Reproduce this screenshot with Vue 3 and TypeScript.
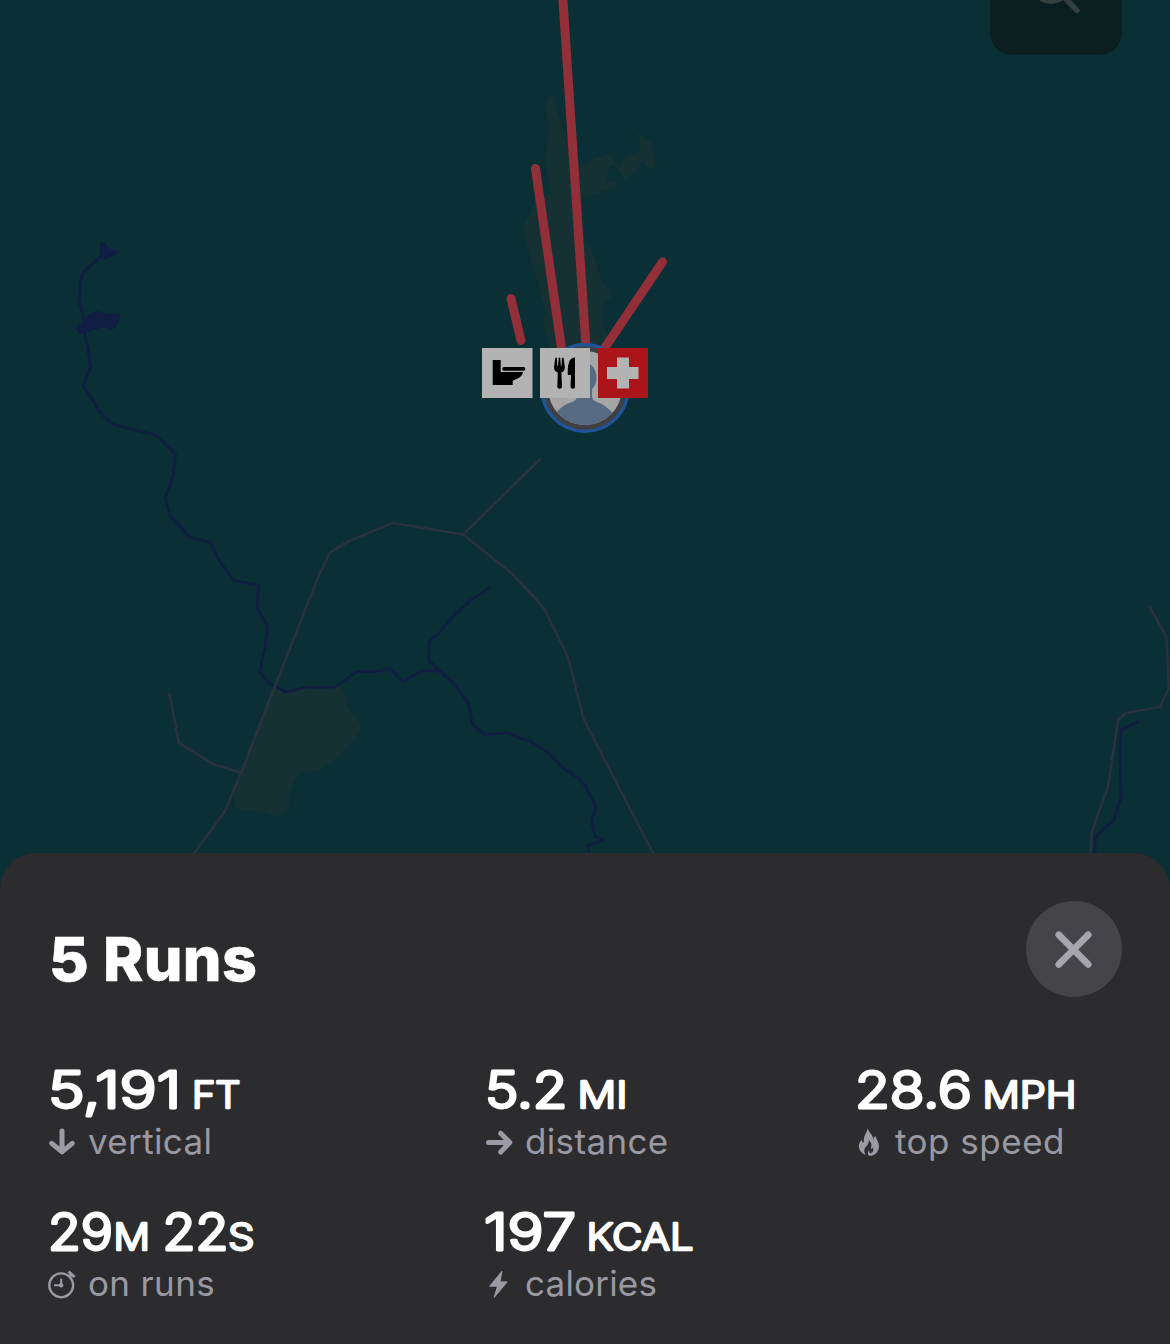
<script setup lang="ts">
type Icon = 'down' | 'right' | 'flame' | 'clock' | 'bolt'

interface Part {
  text: string
  x: number
  width: number
  unit?: boolean
}

interface Stat {
  icon: Icon
  label: string
  parts: Part[]
}

const stats: Stat[] = [
  {
    icon: 'down', label: 'vertical',
    parts: [{ text: '5,191', x: 0, width: 133 }, { text: 'FT', x: 144, width: 48.5, unit: true }],
  },
  {
    icon: 'right', label: 'distance',
    parts: [{ text: '5.2', x: 0, width: 82.5 }, { text: 'MI', x: 92.5, width: 50, unit: true }],
  },
  {
    icon: 'flame', label: 'top speed',
    parts: [{ text: '28.6', x: 0, width: 117 }, { text: 'MPH', x: 127.5, width: 94, unit: true }],
  },
  {
    icon: 'clock', label: 'on runs',
    parts: [
      { text: '29', x: 0, width: 65 }, { text: 'M', x: 65.5, width: 36.5, unit: true },
      { text: '22', x: 114.5, width: 66 }, { text: 'S', x: 180, width: 26.5, unit: true },
    ],
  },
  {
    icon: 'bolt', label: 'calories',
    parts: [{ text: '197', x: -1, width: 92 }, { text: 'KCAL', x: 101.5, width: 107, unit: true }],
  },
]
</script>

<template>
  <main class="screen">
    <svg class="map" width="1170" height="900" viewBox="0 0 1170 900" fill="none">
      <g fill="#163133">
        <path transform="translate(500 80) scale(.33333)" d="M147 47H158L180 115 200 175 240 262 280 238 330 220 345 250 360 255 378 230 415 215 424 195 408 155 450 183 470 255 452 270 426 243 408 278 373 297 345 255 328 257 320 305 340 303 352 322 246 352 255 487 270 500 290 548 305 608 327 628 333 655 310 667 303 700 320 770 300 830 150 805 127 722 138 695 105 580 90 530 69 445 103 370 108 355 155 342 134 245 148 135 133 80Z" />
        <path transform="translate(150 540) scale(.33333)" d="M375 445 405 457 470 442 572 440 585 460 593 500 634 555V573L575 640 510 693 450 697 440 708 415 770 418 813 378 831 340 816 280 812 252 800V750Z" />
      </g>
      <g fill="#111d42">
        <path d="M101 242 105 243 109 249 118 250 120 252.500 105 260 101 257 99 249Z" />
        <path d="M76 328 84 320 88 314 98 311 106 313.500 118 313.500 121 317 115 328 111 330 106 327 100 328 85 333 79 334Z" />
      </g>
      <g stroke="#111d42" stroke-width="2.700" stroke-linejoin="round" stroke-linecap="round">
        <path d="M101.700 255.700 84 271.500 81 278 79 301 84 320 85 334 89 355 90.500 368 83 386 95 403 97.500 410 112 424 134 430 155 434.500 175.500 454 173 476 165.500 497 169.500 515 190 537.500 210 542 220 562 234 580.500 258.500 585 257 608 267.700 626 265 648 259.500 672 268 682 285 692 306 687.500 335.500 687 357 671.500H376L390 668.500 403 681.500 422 670.500 440 671" />
        <path d="M489.500 587.500 470 601 454 615 439 633 429 641.500 428.500 660 440 671 455 685 468 703 472.500 724 484.500 734.500 507 733 524 740H529L548 753 563 768 580 779 586 787 596 807.500 591.500 821 595 836 603 840.500 588 845.500 589 856" />
        <path d="M1138 722 1121 730 1120 752 1121 797 1114 820 1095 837V856" />
      </g>
      <g stroke="#2a313f" stroke-width="2.700" stroke-linejoin="round" stroke-linecap="round">
        <path d="M540 459.500 463 534.500" />
        <path d="M192 856 224.500 812 241 773 275 686 319 575 330 552.500 349 541 393 523 463 534.500 512 573.500 544 608 568 657 583.500 719 654.500 856" />
        <path d="M169.500 694 179 743 213 764 241 773" />
        <path d="M1150 607.500 1166.500 637 1169 688 1160 707 1126 713 1118 720 1108 787 1092 831 1090 856" />
      </g>
      <g stroke="#922f39" stroke-width="9" stroke-linecap="round">
        <path d="M562.600-5 586.500 355M535.500 168.500 562.500 355M511 298.500 521 340.500M662.500 262 602 352" />
      </g>

      <!-- user location -->
      <clipPath id="face"><circle cx="585" cy="388" r="37" /></clipPath>
      <circle cx="585" cy="388" r="45" fill="#1f5598" />
      <circle cx="585" cy="388" r="41.800" fill="#404042" />
      <g clip-path="url(#face)">
        <circle cx="585" cy="388" r="38" fill="#a6a6a6" />
        <ellipse cx="584.500" cy="377.500" rx="12" ry="15" fill="#566b82" />
        <path fill="#566b82" d="M577 388H592V396Q592 400 597 402 606 405 612.500 413V430H556V413Q562 405 572 402 577 400 577 396Z" />
      </g>

      <!-- facility pins -->
      <path fill="#b3b3b3" d="M482 348H532.500V398H482ZM540 348H590V398H540Z" />
      <path fill="#ab1419" d="M598 348H648V398H598Z" />
      <path fill="#b3b3b3" d="M617 357.500H629V367H638.500V379H629V388.500H617V379H607V367H617Z" />
      <g fill="#000">
        <path d="M492.700 360H500.700V372H523Q522.500 376.500 516.500 379 513.500 380 512.700 381V385H492.700Z" />
        <rect x="502.300" y="367" width="23" height="3.700" rx="1.700" />
        <path d="M555.300 358Q556.200 356.800 556.900 358L557.300 366H558L558.600 358Q559.500 356.800 560.300 358L560.900 366H561.500L562 358Q562.800 356.800 563.600 358L564.800 367Q564.800 371.500 561.400 372.500L562 387Q561.800 388.800 559.600 388.800 557.500 388.800 557.300 387L557.800 372.500Q554 371.500 554 367Z" />
        <path d="M575 357.500V387Q575 388.800 572.900 388.800 570.600 388.800 570.500 387L571 375H568.500Q567.700 375 567.700 373.500 567.500 364 570 360 572 357 575 357.500Z" />
      </g>

      <rect x="990" y="-60" width="132" height="114.700" rx="22" fill="#0b1e20" />
      <g stroke="#344040" stroke-width="5.500" stroke-linecap="round">
        <circle cx="1051" cy="-17.500" r="18.500" />
        <path d="M1064-3 1077 10.300" />
      </g>
    </svg>

    <section class="sheet">
      <header class="head">
        <h1 class="title">5 Runs</h1>
        <button class="close" aria-label="Close">
          <svg width="96" height="96" viewBox="0 0 96 96" stroke="#a6a5ad" stroke-width="6.800" stroke-linecap="round">
            <path d="M32.800 33.800 62.200 63.300M62.200 33.800 32.800 63.300" />
          </svg>
        </button>
      </header>

      <div class="stats">
        <div v-for="s in stats" :key="s.label" class="stat">
          <svg class="value" width="240" height="60" viewBox="0 0 240 60">
            <text
              v-for="p in s.parts" :key="p.text" :x="p.x" y="47.600"
              :textLength="p.width" lengthAdjust="spacingAndGlyphs" :class="{ unit: p.unit }"
            >{{ p.text }}</text>
          </svg>
          <div class="caption">
            <svg class="icon" width="28" height="30" viewBox="0 0 28 30" fill="none">
              <path v-if="s.icon === 'down'" class="arrow" d="M14 4V24.300M3.700 16.400 14 24.800 24.300 16.400" />
              <path v-else-if="s.icon === 'right'" class="arrow" d="M3.500 15.500H24M15.700 6.200 24.800 15.500 15.700 25" />
              <g v-else-if="s.icon === 'clock'" stroke="#9c9ba4" stroke-width="2.400">
                <circle cx="13.200" cy="16.300" r="11.900" />
                <path d="M13.200 9.700V16.300H6" stroke-width="2" />
                <path d="M20.500 2.500 26.600 8M21.500 7.500 24 5" stroke-width="2.800" />
                <circle cx="13.200" cy="16.300" r="1" />
              </g>
              <path v-else-if="s.icon === 'bolt'" class="solid edge" d="M16.900 2.300 4.700 17.200H12.500L9.200 28.400 22.200 12.900H15Z" />
              <path v-else class="solid" d="M12.800 1.300C11.800 5.500 9.500 8 8.900 11.200 8.700 13 9.200 14.500 8.600 15.300 7.700 16 7 14.500 6.700 12.700 4.200 15 3.600 18 4 20.500 4.500 24 7 26.800 10.800 28 8.500 24.500 9 21.500 11.500 19 13.200 17.300 14.200 15.500 13.700 13 16.500 15.500 17 18 16 20.500 15.600 21.800 16.500 22.700 17.700 20.500 19 23.500 18 25.500 15.200 26.200 14 25.500 14.200 24 14.300 23 12.300 25 12.500 27.500 14 28.800 19.500 29.400 24 25 24 19 24 15.500 21.500 12.500 20.300 8.800 18.800 10 18.800 11.700 18.600 12.700 17.800 7.500 13.500 5.500 12.800 1.300Z" />
            </svg>
            <span class="label" :class="s.icon">{{ s.label }}</span>
          </div>
        </div>
      </div>
    </section>
  </main>
</template>

<style>
body {
  margin: 0;
  background: #0a2f34;
}
</style>

<style scoped>
.screen {
  position: relative;
  display: flex;
  flex-direction: column;
  justify-content: flex-end;
  width: 1170px;
  height: 1344px;
  overflow: hidden;
  background: #0a2f34;
  font-family: Inter, "Liberation Sans", sans-serif;
}
.map {
  position: absolute;
  top: 0;
  left: 0;
}
.sheet {
  position: relative;
  box-sizing: border-box;
  height: 491px;
  padding: 48px 48px 0;
  border-radius: 36px 36px 0 0;
  background: #2c2c2e;
}
.head {
  display: flex;
  justify-content: space-between;
  height: 159px;
}
.title {
  margin: 20px 0 0 1px;
  font-size: 61px;
  line-height: 76px;
  font-weight: 800;
  letter-spacing: 0.4px;
  color: #fff;
  -webkit-text-stroke: 0.6px #fff;
}
.close {
  width: 96px;
  height: 96px;
  padding: 0;
  border: 0;
  border-radius: 50%;
  background: #454449;
}
.close svg {
  display: block;
}
.stats {
  display: grid;
  grid-template-columns: 437px 370px 1fr;
  row-gap: 38px;
}
.stat {
  height: 104px;
}
.value {
  display: block;
  overflow: visible;
}
.value text {
  font-size: 50px;
  font-weight: 300;
  fill: #fff;
  stroke: #fff;
  stroke-width: 2.900px;
  stroke-linejoin: round;
}
.value .unit {
  font-size: 37px;
  stroke-width: 2.400px;
}
.caption {
  display: flex;
  align-items: center;
  height: 44px;
}
.icon {
  flex: none;
  margin-right: 12px;
}
.arrow {
  stroke: #9c9ba4;
  stroke-width: 5px;
  stroke-linecap: round;
  stroke-linejoin: round;
}
.solid {
  fill: #9c9ba4;
}
.edge {
  stroke: #9c9ba4;
  stroke-width: 1px;
  stroke-linejoin: round;
}
.label {
  margin-bottom: 2px;
  font-size: 35px;
  line-height: 44px;
  letter-spacing: 0.35px;
  white-space: nowrap;
  color: #9a99a2;
}
.label.flame {
  letter-spacing: 0.5px;
}
.label.bolt {
  letter-spacing: 0.2px;
}
</style>
